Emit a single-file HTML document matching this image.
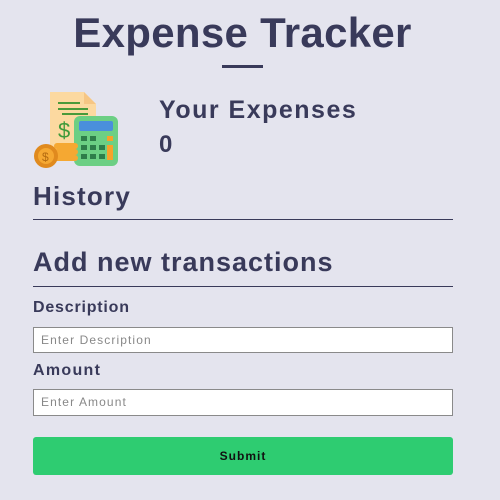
<!DOCTYPE html>
<html><head><style>
body{margin:0;width:500px;height:500px;background:#e4e4ee;font-family:"Liberation Sans",sans-serif;color:#393a5a;position:relative;overflow:hidden}
div,span{position:absolute}
.b{font-weight:bold}
.line{left:33px;width:420px;height:1px;background:#393a5a}
.inp{left:33px;background:#fff;border:1px solid #8a8a8a;font-size:12px;color:#888;box-sizing:border-box;width:420px;padding-left:7px;letter-spacing:1.1px}
</style></head><body>
<div class="b" style="left:0;width:485px;text-align:center;top:9px;font-size:42px;letter-spacing:0.3px">Expense Tracker</div>
<div style="left:222px;top:65px;width:41px;height:3px;background:#393a5a"></div>
<svg style="position:absolute;left:30px;top:88px" width="92" height="80" viewBox="0 0 92 80">
<path d="M20 4h34l12 12v52H20z" fill="#fcd9a0"/>
<path d="M54 4v12h12z" fill="#f6c684"/>
<rect x="28" y="14" width="22" height="2" fill="#4a9a3a"/><rect x="28" y="20" width="30" height="2" fill="#4a9a3a"/><rect x="32" y="25" width="26" height="2" fill="#4a9a3a"/>
<text x="28" y="50" font-size="22" fill="#3f9a3a" font-family="Liberation Sans">$</text>
<rect x="44" y="28" width="44" height="50" rx="6" fill="#6ccf84"/>
<rect x="49" y="33" width="34" height="10" rx="2" fill="#4a8fdc"/>
<g fill="#2e7d4a"><rect x="51" y="48" width="6" height="5"/><rect x="60" y="48" width="6" height="5"/><rect x="51" y="57" width="6" height="5"/><rect x="60" y="57" width="6" height="5"/><rect x="69" y="57" width="6" height="5"/><rect x="51" y="66" width="6" height="5"/><rect x="60" y="66" width="6" height="5"/><rect x="69" y="66" width="6" height="5"/></g>
<rect x="77" y="48" width="6" height="5" fill="#f7a22a"/><rect x="77" y="57" width="6" height="15" fill="#f7a22a"/>
<g fill="#f5a832"><rect x="24" y="55" width="24" height="6" rx="3"/><rect x="24" y="61" width="24" height="6" rx="3"/><rect x="24" y="67" width="24" height="6" rx="3"/></g>
<circle cx="16" cy="68" r="12" fill="#e08a1e"/><circle cx="16" cy="68" r="8" fill="#f5a832"/>
<text x="12" y="73" font-size="12" fill="#b36a10" font-family="Liberation Sans">$</text>
</svg>
<div class="b" style="left:159px;top:96px;font-size:25px;letter-spacing:1.5px">Your Expenses</div>
<div class="b" style="left:159px;top:131px;font-size:24px">0</div>
<div class="b" style="left:33px;top:181px;font-size:26px;letter-spacing:1.2px">History</div>
<div class="line" style="top:219px"></div>
<div class="b" style="left:33px;top:247px;font-size:27px;letter-spacing:1px">Add new transactions</div>
<div class="line" style="top:286px"></div>
<div class="b" style="left:33px;top:299px;font-size:16px;letter-spacing:0.8px">Description</div>
<div class="inp" style="top:327px;height:26px;line-height:24px">Enter Description</div>
<div class="b" style="left:33px;top:362px;font-size:16px;letter-spacing:1.3px">Amount</div>
<div class="inp" style="top:389px;height:27px;line-height:25px">Enter Amount</div>
<div class="b" style="left:33px;top:437px;width:420px;height:38px;background:#2ecc71;border-radius:3px;text-align:center;line-height:38px;font-size:12px;color:#111;letter-spacing:1px">Submit</div>
</body></html>
